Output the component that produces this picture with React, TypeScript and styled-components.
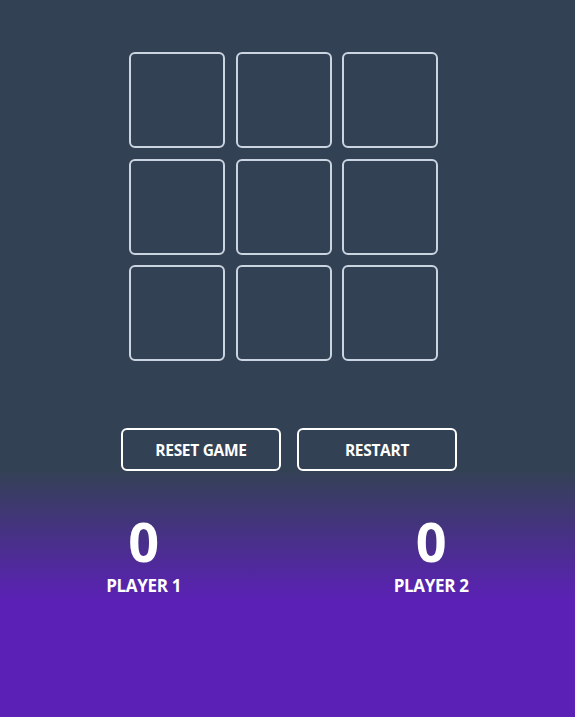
import React from "react";
import styled, { createGlobalStyle } from "styled-components";

const Global = createGlobalStyle`
  html, body { margin: 0; padding: 0; }
  body {
    background: #334155;
    font-family: "Open Sans", "Noto Sans", sans-serif;
    color: #ffffff;
  }
`;

const Page = styled.div`
  min-height: 100vh;
  display: flex;
  flex-direction: column;
  background: #334155;
`;

const Top = styled.section`
  display: flex;
  flex-direction: column;
  align-items: center;
  padding-top: 52px;
`;

const BoardRow = styled.div`
  display: flex;
  justify-content: center;
  align-self: stretch;
  padding-right: 8px;
`;

const Board = styled.div`
  display: grid;
  grid-template-columns: repeat(3, 96px);
  grid-template-rows: repeat(3, 96px);
  gap: 10.5px;
`;

const Cell = styled.button`
  box-sizing: border-box;
  width: 96px;
  height: 96px;
  background: transparent;
  border: 2px solid #cbd5e1;
  border-radius: 6px;
  padding: 0;
  cursor: pointer;
`;

const Controls = styled.div`
  display: flex;
  justify-content: center;
  align-self: stretch;
  gap: 16px;
  margin-top: 67px;
  padding-left: 3px;
`;

const ActionButton = styled.button`
  box-sizing: border-box;
  width: 160px;
  height: 43px;
  background: transparent;
  border: 2px solid #ffffff;
  border-radius: 6px;
  color: #ffffff;
  font-family: "Open Sans", "Noto Sans", sans-serif;
  font-weight: 700;
  font-size: 15.5px;
  letter-spacing: -0.3px;
  text-transform: uppercase;
  cursor: pointer;
`;

const Scores = styled.section`
  flex: 1;
  display: grid;
  grid-template-columns: 1fr 1fr;
  align-items: start;
  padding-top: 40px;
  background: linear-gradient(to bottom, #334155 0px, #5b21b6 130px, #5b21b6 100%);
`;

const Score = styled.div`
  display: flex;
  flex-direction: column;
  align-items: center;
`;

const Points = styled.div`
  font-size: 54px;
  font-weight: 700;
  line-height: 60px;
`;

const Label = styled.div`
  font-size: 17px;
  font-weight: 700;
  line-height: 20px;
  margin-top: 5px;
  letter-spacing: -0.3px;
`;

export default function App() {
  const cells = Array.from({ length: 9 });
  return (
    <Page>
      <Global />
      <Top>
        <BoardRow>
          <Board>
            {cells.map((_, i) => (
              <Cell key={i} aria-label={`cell ${i + 1}`} />
            ))}
          </Board>
        </BoardRow>
        <Controls>
          <ActionButton>Reset Game</ActionButton>
          <ActionButton>Restart</ActionButton>
        </Controls>
      </Top>
      <Scores>
        <Score>
          <Points>0</Points>
          <Label>PLAYER 1</Label>
        </Score>
        <Score>
          <Points>0</Points>
          <Label>PLAYER 2</Label>
        </Score>
      </Scores>
    </Page>
  );
}
